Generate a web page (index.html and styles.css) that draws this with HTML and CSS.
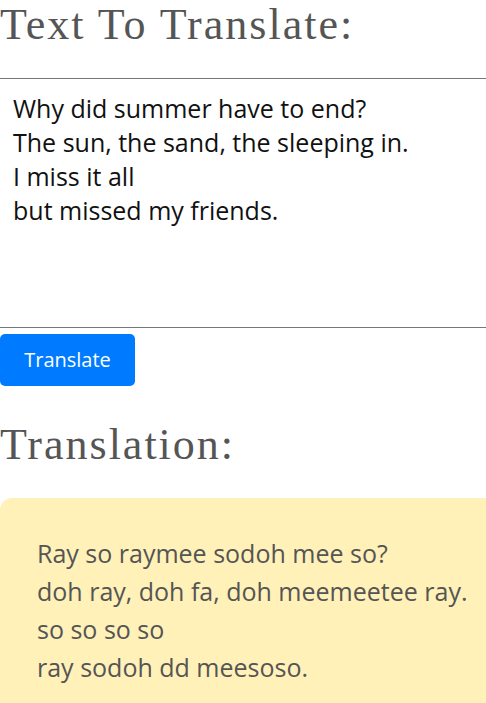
FILE: index.html
```html
<!DOCTYPE html>
<html lang="en">
<head>
<meta charset="utf-8">
<title>Translator</title>
<link rel="stylesheet" href="styles.css">
</head>
<body>
<main class="page">
  <h1 class="heading heading-input">Text To Translate:</h1>
  <textarea class="source">Why did summer have to end?
The sun, the sand, the sleeping in.
I miss it all
but missed my friends.</textarea>
  <button class="btn-translate" type="button">Translate</button>
  <h2 class="heading heading-output">Translation:</h2>
  <div class="result">
    <p class="result-line">Ray so raymee sodoh mee so?</p>
    <p class="result-line">doh ray, doh fa, doh meemeetee ray.</p>
    <p class="result-line">so so so so</p>
    <p class="result-line">ray sodoh dd meesoso.</p>
  </div>
</main>
</body>
</html>
```
FILE: styles.css
```css
html, body {
  margin: 0;
  padding: 0;
  background: #fff;
}
body {
  font-family: "Open Sans", "Liberation Sans", sans-serif;
}
.page {
  display: flex;
  flex-direction: column;
  align-items: flex-start;
}
.heading {
  font-family: "Liberation Serif", "DejaVu Serif", serif;
  font-weight: normal;
  font-size: 44px;
  letter-spacing: 2px;
  line-height: 1.15;
  color: #555;
  margin: 0;
}
.heading-input {
  margin-bottom: 27px;
}
.source {
  box-sizing: border-box;
  width: 100%;
  height: 250px;
  margin: 0;
  padding: 12px 13px;
  border: none;
  border-top: 1px solid #777;
  border-bottom: 1px solid #777;
  font-family: "Open Sans", sans-serif;
  font-size: 25px;
  line-height: 34px;
  color: #111;
  resize: none;
  outline: none;
  overflow: hidden;
}
.btn-translate {
  margin-top: 6px;
  width: 135px;
  height: 52px;
  border: none;
  border-radius: 5px;
  background: #007bff;
  color: #fff;
  font-family: "Open Sans", sans-serif;
  font-size: 20px;
  padding: 0;
}
.heading-output {
  margin-top: 34px;
  margin-bottom: 28px;
}
.result {
  box-sizing: border-box;
  width: 100%;
  background: #fff1b8;
  border-top-left-radius: 12px;
  padding: 36px 10px 30px 37px;
  font-size: 25px;
  line-height: 38px;
  color: #555;
}
.result-line {
  margin: 0;
  white-space: nowrap;
}
```
